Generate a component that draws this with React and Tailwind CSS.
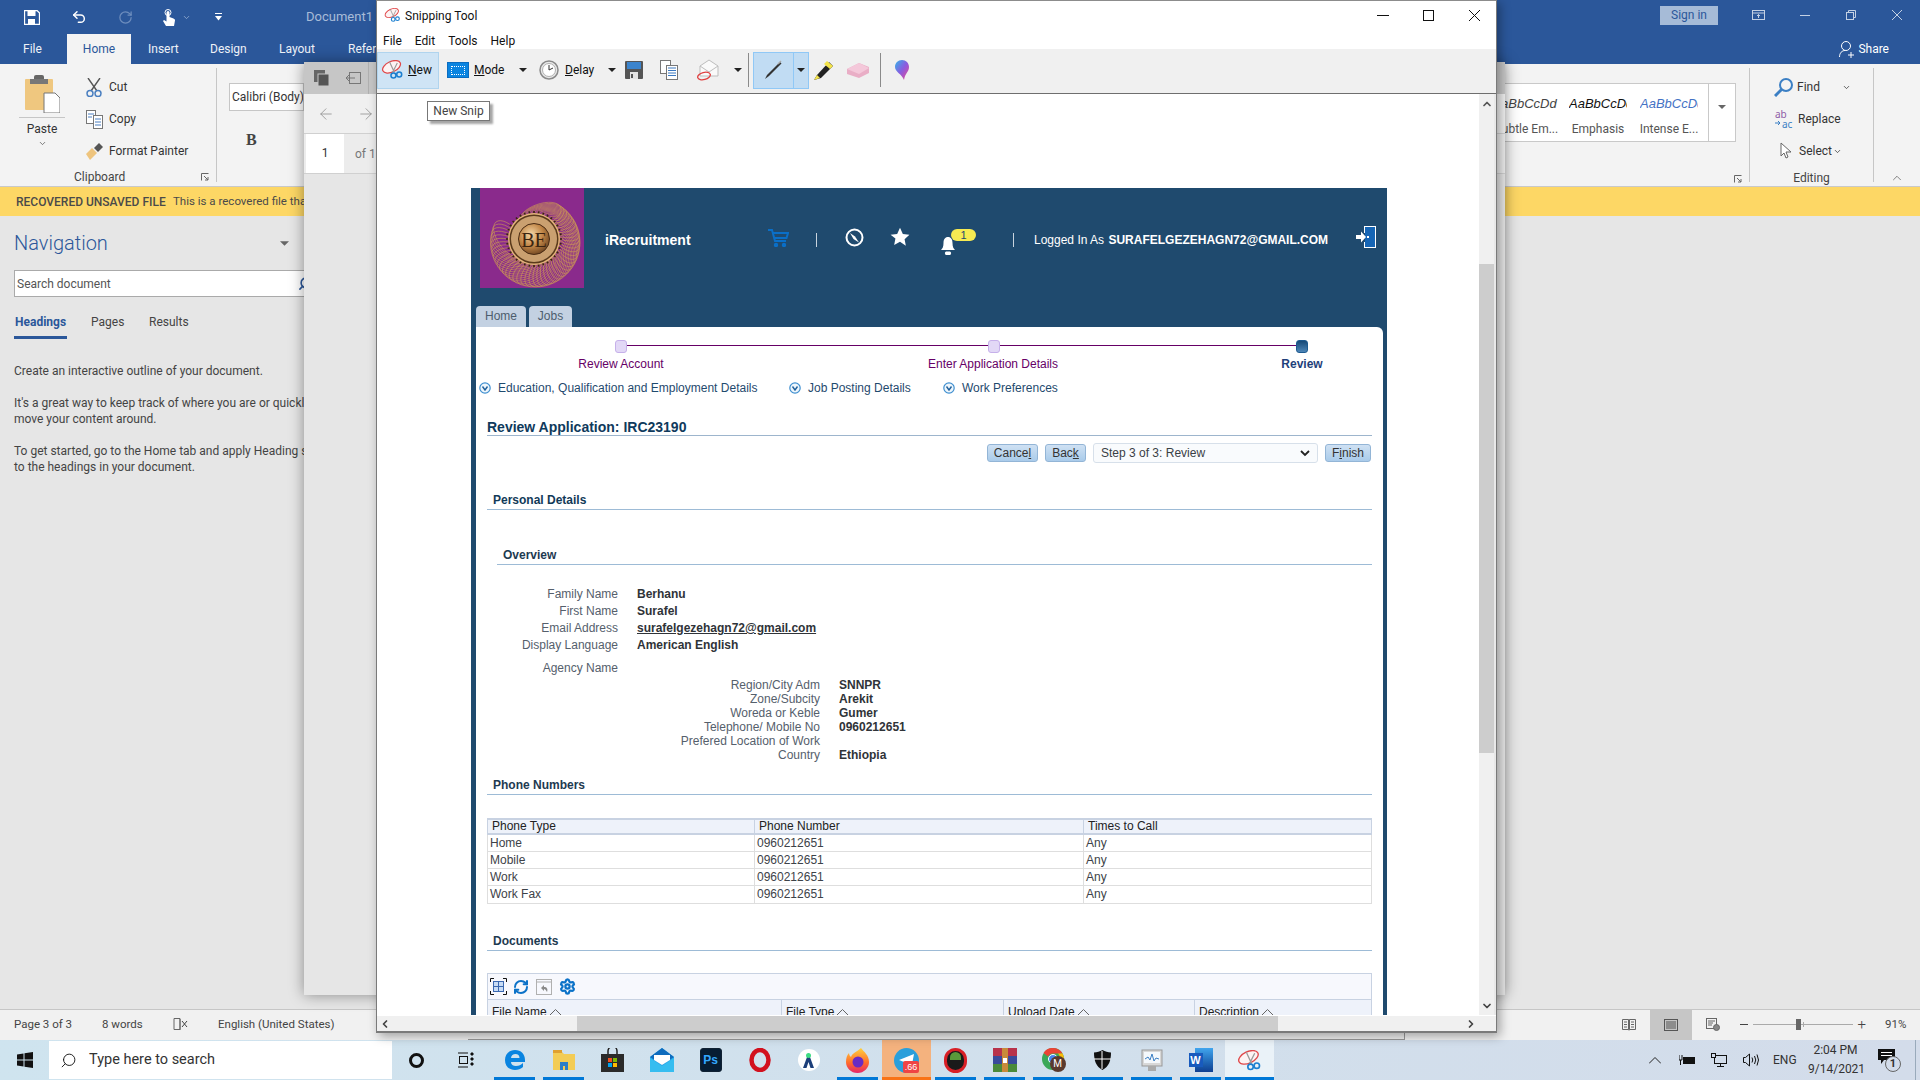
import React from "react";
import { Undo2, RotateCw, ChevronDown, ChevronUp, ChevronLeft, ChevronRight, ArrowLeft, ArrowRight, Search, RefreshCw, Settings } from "lucide-react";

const Tri = ({ c = "#333", w = 8, h = 4 }) => (
  <svg width={w} height={h} viewBox="0 0 8 4"><path d="M0 0h8L4 4z" fill={c} /></svg>
);

const SnipIcon = ({ s = 24 }) => (
  <svg width={s} height={s * 0.84} viewBox="0 0 24 20" fill="none">
    <ellipse cx="11" cy="7" rx="10" ry="5.5" transform="rotate(-25 11 7)" stroke="#e0484a" strokeWidth="1.3" fill="#fdf3f3" />
    <path d="M9 2l5 11M17 3L12 13" stroke="#9a9a9a" strokeWidth="1.2" />
    <circle cx="13" cy="16" r="2.6" stroke="#1b7fd0" strokeWidth="1.6" />
    <circle cx="19" cy="15" r="2.6" stroke="#1b7fd0" strokeWidth="1.6" />
  </svg>
);

const Logo = () => {
  const loops = Array.from({ length: 46 }, (_, i) => {
    const deg = -75 + i * 5.6;
    const a = (deg * Math.PI) / 180;
    const rad = 27 + 5 * Math.sin(a + 0.6);
    return { x: 54 + rad * Math.cos(a), y: 50 + rad * Math.sin(a), r: deg + 55 };
  });
  const teeth = Array.from({ length: 36 }, (_, i) => i * 10);
  return (
    <svg width="104" height="100" viewBox="0 0 104 100" className="block">
      <rect width="104" height="100" fill="#8a2a8c" />
      <g fill="none" stroke="#d0a050" strokeWidth="0.55">
        {loops.map((l, i) => (
          <ellipse key={i} cx={l.x} cy={l.y} rx="22" ry="11" transform={`rotate(${l.r} ${l.x} ${l.y})`} />
        ))}
      </g>
      <defs>
        <radialGradient id="coin" cx="40%" cy="35%" r="70%">
          <stop offset="0" stopColor="#f6d8a8" />
          <stop offset="0.55" stopColor="#c08546" />
          <stop offset="1" stopColor="#6b4220" />
        </radialGradient>
      </defs>
      {teeth.map((t) => (
        <rect key={t} x="53.2" y="23" width="1.6" height="3" fill="#3a2410" transform={`rotate(${t} 54 51)`} />
      ))}
      <circle cx="54" cy="51" r="26" fill="#e2b27a" />
      <circle cx="54" cy="51" r="24.500" fill="#5a3a1c" />
      <circle cx="54" cy="51" r="23" fill="#caa070" />
      <circle cx="54" cy="51" r="15.500" fill="url(#coin)" stroke="#4a2c14" strokeWidth="1" />
      <text x="54" y="59" textAnchor="middle" fontSize="20" fontFamily="'Liberation Serif',serif" fill="#3b2410">BE</text>
    </svg>
  );
};

const Circ = () => (
  <svg width="12" height="12" viewBox="0 0 12 12" fill="none" className="shrink-0">
    <circle cx="6" cy="6" r="5.2" stroke="#3f8fd0" strokeWidth="1.2" fill="#eef6fc" />
    <path d="M3.5 4.5L6 8l2.5-3.5" stroke="#1f5f9a" strokeWidth="1.4" />
  </svg>
);

const Square3 = ({ dark }) => (
  <div className={dark ? "w-[12px] h-[13px] rounded-[3px] border border-[#1d5a90] bg-gradient-to-b from-[#164a78] to-[#4d86b8] shrink-0" : "w-[12px] h-[13px] rounded-[3px] border border-[#c6b0ea] bg-[#e2d8f6] shrink-0"} />
);

const Sec = ({ children, cls }) => (
  <div className={"h-[17px] leading-[16px] pl-[6px] font-bold text-[#1e3a50] text-[12px] border-b border-[#9dbbd6] box-content " + (cls || "")}>{children}</div>
);

const Btn = ({ w, children }) => (
  <div className={w + " h-[18px] leading-[17px] text-center text-[12px] text-[#333] rounded-[3px] border border-[#93b5d6] bg-gradient-to-b from-[#cfe1f3] to-[#a9cbea]"}>{children}</div>
);

const Row = ({ l, v, link }) => (
  <div className="flex h-[17px] leading-[17px]">
    <div className="w-[121px] text-right text-[#55606c]">{l}</div>
    <div className={"ml-[19px] font-bold text-[#2f3338] " + (link ? "underline" : "")}>{v}</div>
  </div>
);

const Sub = ({ l, v }) => (
  <div className="flex h-[14px] leading-[14px]">
    <div className="w-[323px] text-right text-[#55606c]">{l}</div>
    <div className="ml-[19px] font-bold text-[#2f3338]">{v}</div>
  </div>
);

const phones = ["Home", "Mobile", "Work", "Work Fax"];

const WebPage = () => (
  <div className="w-[916px] mt-[94px] ml-[94px] bg-[#1f4a6e] [font-family:'Liberation_Sans',Arial,sans-serif] text-[12px]">
    <div className="h-[118px] flex items-start text-white">
      <div className="ml-[9px]"><Logo /></div>
      <div className="ml-[21px] mt-[44px] font-bold text-[14px] leading-[16px] w-[86px]">iRecruitment</div>
      <svg className="ml-[77px] mt-[41px]" width="21" height="18" viewBox="0 0 21 18" fill="none" stroke="#0a6fc8" strokeWidth="2">
        <path d="M0 1h4l3 11h11" /><path d="M5 4h15l-1.5 5H6.5" /><circle cx="8" cy="16" r="1.2" fill="#0a6fc8" /><circle cx="16" cy="16" r="1.2" fill="#0a6fc8" />
      </svg>
      <div className="ml-[27px] mt-[45px] w-px h-[14px] bg-[#c8d4de]" />
      <svg className="ml-[28px] mt-[40px]" width="19" height="19" viewBox="0 0 19 19" fill="none">
        <circle cx="9.5" cy="9.5" r="8" stroke="#fff" strokeWidth="2" />
        <path d="M5 5l5 3.5 4 6-5.5-3.5z" fill="#fff" />
      </svg>
      <svg className="ml-[26px] mt-[39px]" width="20" height="20" viewBox="0 0 24 24"><path d="M12 1l3.4 7.3 7.9 1-5.8 5.4 1.5 7.9L12 17.8l-7 3.8 1.5-7.9L.7 9.3l7.9-1z" fill="#fff" /></svg>
      <div className="relative ml-[31px] mt-[49px] w-[14px] h-[18px]">
        <svg width="14" height="18" viewBox="0 0 14 18"><path d="M7 0c3 0 4.500 2.500 4.500 6 0 4 1 5.500 2.500 7H0c1.500-1.500 2.500-3 2.500-7C2.500 2.500 4 0 7 0zM5 14.500h4A2 2 0 0 1 7 18a2 2 0 0 1-2-3.500z" fill="#fff" /></svg>
        <div className="absolute left-[10px] top-[-8px] w-[25px] h-[12px] rounded-full bg-[#f6ea52] text-[#1f4a6e] text-[11px] leading-[12px] text-center">1</div>
      </div>
      <div className="ml-[58px] mt-[45px] w-px h-[14px] bg-[#c8d4de]" />
      <div className="ml-[20px] mt-[44px] leading-[16px] whitespace-nowrap">Logged In As <span className="font-bold ml-[1px]">SURAFELGEZEHAGN72@GMAIL.COM</span></div>
      <svg className="ml-[28px] mt-[38px]" width="20" height="22" viewBox="0 0 20 22">
        <path d="M8 0h12v22H8v-6h1v5h10V1H9v6H8z" fill="#fff" />
        <rect x="9" y="1" width="10" height="20" fill="#1565b5" />
        <rect x="11" y="10" width="2" height="2" fill="#fff" />
        <path d="M0 9h5V5.500L10 11l-5 5.500V13H0z" fill="#fff" />
      </svg>
    </div>
    <div className="h-[21px] flex pl-[5px] gap-[3px] text-[#4d5d6d]">
      <div className="w-[50px] h-[21px] leading-[21px] text-center rounded-t-[4px] bg-[#c3d1e2]">Home</div>
      <div className="w-[43px] h-[21px] leading-[21px] text-center rounded-t-[4px] bg-[#c3d1e2]">Jobs</div>
    </div>
    <div className="ml-[5px] mr-[4px] h-[700px] bg-white rounded-tr-[6px] overflow-hidden">
      <div className="flex pl-[139px] pt-[13px]">
        <Square3 />
        <div className="w-[361px] h-[1px] mt-[5px] bg-[#660066]" />
        <Square3 />
        <div className="w-[296px] h-[1px] mt-[5px] bg-[#660066]" />
        <Square3 dark />
      </div>
      <div className="flex h-[14px] mt-[4px] leading-[14px] text-[#660066] text-center">
        <div className="ml-[100px] w-[90px] whitespace-nowrap">Review Account</div>
        <div className="ml-[261px] w-[132px] whitespace-nowrap">Enter Application Details</div>
        <div className="ml-[213px] w-[60px] font-bold text-[#1f3f7a]">Review</div>
      </div>
      <div className="flex items-center h-[14px] mt-[10px] pl-[3px] text-[#1f4a6e] whitespace-nowrap">
        <Circ /><span className="ml-[7px] w-[259px]">Education, Qualification and Employment Details</span>
        <span className="ml-[32px]"><Circ /></span><span className="ml-[7px] w-[103px]">Job Posting Details</span>
        <span className="ml-[32px]"><Circ /></span><span className="ml-[7px]">Work Preferences</span>
      </div>
      <div className="mx-[11px]">
        <div className="mt-[24px] h-[16px] leading-[16px] font-bold text-[14px] text-[#0f3a5c] border-b border-[#9db5cd] box-content">Review Application: IRC23190</div>
        <div className="flex justify-end items-center gap-[7px] pr-[1px] mt-[7px] h-[20px]">
          <Btn w="w-[51px]">Cance<u>l</u></Btn>
          <Btn w="w-[41px]">Bac<u>k</u></Btn>
          <div className="w-[225px] h-[20px] flex items-center justify-between px-[7px] border border-[#d7e0ea] rounded-[3px] bg-[#f9fbfd] text-[#3a4046]">
            <span>Step 3 of 3: Review</span>
            <svg width="10" height="7" viewBox="0 0 10 7" fill="none"><path d="M1 1l4 4 4-4" stroke="#222" strokeWidth="1.800" /></svg>
          </div>
          <Btn w="w-[46px]">F<u>i</u>nish</Btn>
        </div>
        <Sec cls="mt-[29px] text-[#123a58]">Personal Details</Sec>
        <div className="ml-[10px]">
          <Sec cls="mt-[37px]">Overview</Sec>
          <div className="mt-[21px]">
            <Row l="Family Name" v="Berhanu" />
            <Row l="First Name" v="Surafel" />
            <Row l="Email Address" v="surafelgezehagn72@gmail.com" link />
            <Row l="Display Language" v="American English" />
            <div className="mt-[6px]"><Row l="Agency Name" v="" /></div>
            <div className="mt-[1px]">
              <Sub l="Region/City Adm" v="SNNPR" />
              <Sub l="Zone/Subcity" v="Arekit" />
              <Sub l="Woreda or Keble" v="Gumer" />
              <Sub l="Telephone/ Mobile No" v="0960212651" />
              <Sub l="Prefered Location of Work" v="" />
              <Sub l="Country" v="Ethiopia" />
            </div>
          </div>
        </div>
        <Sec cls="mt-[15px]">Phone Numbers</Sec>
        <div className="mt-[23px] border border-[#dedede] text-[#3d4248]">
          <div className="grid grid-cols-[267px_329px_1fr] h-[17px] leading-[13px] bg-[#eef2fa] border-y-2 border-x border-[#c8d2e2] -mt-[1px] -mx-[1px] text-[#222]">
            <div className="pl-[4px] border-r border-[#c8d2e2]">Phone Type</div>
            <div className="pl-[4px] border-r border-[#c8d2e2]">Phone Number</div>
            <div className="pl-[4px]">Times to Call</div>
          </div>
          {phones.map((p) => (
            <div key={p} className="grid grid-cols-[267px_329px_1fr] h-[17px] leading-[16px] border-b border-[#dedede] last:border-b-0">
              <div className="pl-[2px] border-r border-[#dedede]">{p}</div>
              <div className="pl-[2px] border-r border-[#dedede]">0960212651</div>
              <div className="pl-[2px]">Any</div>
            </div>
          ))}
        </div>
        <Sec cls="mt-[29px]">Documents</Sec>
        <div className="mt-[22px] h-[26px] border border-b-0 border-[#c8d2e2] bg-[#f7f8fd] flex items-center pl-[2px]">
          <svg width="17" height="17" viewBox="0 0 17 17" fill="none">
            <rect x="3.500" y="3.500" width="10" height="10" fill="#c8dcf5" stroke="#3a68b0" />
            <path d="M8.500 3.500v10M3.500 8.500h10" stroke="#3a68b0" />
            <path d="M0.500 4V0.500H4M13 0.500h3.500V4M16.500 13v3.500H13M4 16.500H0.500V13" stroke="#111" />
          </svg>
          <RefreshCw size={16} color="#0b72c8" strokeWidth={3} className="ml-[6px]" />
          <svg className="ml-[7px]" width="16" height="16" viewBox="0 0 16 16" fill="none">
            <rect x="0.500" y="0.500" width="15" height="15" stroke="#b0b0b0" />
            <path d="M0 3h16" stroke="#b0b0b0" />
            <path d="M5 9l3-3v2c3 0 4 2 3 5-1-2-2-3-3-3v2z" fill="#8a8a8a" />
          </svg>
          <Settings size={17} color="#0b72c8" strokeWidth={3.200} className="ml-[7px]" />
        </div>
        <div className="grid grid-cols-[294px_222px_191px_1fr] border border-[#c8d2e2] bg-[#eef2fa] h-[26px] text-[#222]">
          {["File Name", "File Type", "Upload Date", "Description"].map((t, i) => (
            <div key={t} className={"pl-[4px] flex items-center h-[24px] gap-[2px] " + (i < 3 ? "border-r border-[#c8d2e2]" : "")}>
              {t}
              <svg width="13" height="7" viewBox="0 0 13 7" fill="none"><path d="M0.500 6.500L6.500 0.500l6 6z" stroke="#666" /></svg>
            </div>
          ))}
        </div>
      </div>
    </div>
  </div>
);

const SnipWindow = () => (
  <div className="absolute left-[376px] top-0 w-[1121px] h-[1033px] bg-white border-t border-[#8c8c8c] border-x-[1px] border-b-2 border-x-[#7a7a7a] border-b-[#7a7a7a] shadow-[3px_3px_10px_rgba(0,0,0,0.35)] flex flex-col text-[12px] text-[#111] z-20">
    <div className="h-[29px] shrink-0 flex items-center relative">
      <div className="ml-[7px]"><SnipIcon s={17} /></div>
      <span className="ml-[4px]">Snipping Tool</span>
      <div className="ml-auto flex items-center">
        <div className="w-[12px] h-px bg-[#111]" />
        <div className="ml-[34px] w-[11px] h-[11px] border border-[#111]" />
        <svg className="ml-[35px] mr-[16px]" width="11" height="11" viewBox="0 0 11 11" stroke="#111"><path d="M0 0l11 11M11 0L0 11" /></svg>
      </div>
    </div>
    <div className="h-[19px] shrink-0 flex items-center pl-[6px] pt-[2px] gap-[13px]">
      <span>File</span><span>Edit</span><span>Tools</span><span>Help</span>
    </div>
    <div className="h-[45px] shrink-0 bg-[#f0f0f0] border-b-[1.5px] border-[#6e6e6e] pb-[2px] flex items-center text-[#111]">
      <div className="w-[62px] h-[37px] bg-[#cfe4f5] border border-[#b0d4ee] flex items-center pl-[3px] gap-[4px]">
        <SnipIcon s={23} /><span><u>N</u>ew</span>
      </div>
      <div className="ml-[8px] w-[22px] h-[16px] bg-[#0a84e0] border border-[#0a6cc0] flex items-center justify-center">
        <div className="w-[14px] h-[9px] border border-dotted border-white" />
      </div>
      <span className="ml-[5px] w-[31px]"><u>M</u>ode</span>
      <span className="ml-[14px]"><Tri c="#222" /></span>
      <svg className="ml-[12px]" width="20" height="20" viewBox="0 0 20 20" fill="none">
        <circle cx="10" cy="10" r="9" fill="#e8e8e8" stroke="#8a8a8a" strokeWidth="1.500" />
        <circle cx="10" cy="10" r="6.500" fill="#fff" stroke="#b0b0b0" />
        <path d="M10 5v5l4-2" stroke="#333" />
      </svg>
      <span className="ml-[6px] w-[29px]"><u>D</u>elay</span>
      <span className="ml-[14px]"><Tri c="#222" /></span>
      <svg className="ml-[9px]" width="18" height="18" viewBox="0 0 18 18">
        <rect width="18" height="18" rx="1" fill="#555" />
        <rect x="2" y="1" width="14" height="7" fill="#3c84cc" />
        <rect x="5" y="11" width="8" height="7" fill="#e4e4e4" />
        <rect x="6" y="13" width="2" height="4" fill="#555" />
      </svg>
      <svg className="ml-[17px]" width="18" height="20" viewBox="0 0 18 20" fill="none" stroke="#777">
        <rect x="0.500" y="0.500" width="10" height="13" fill="#fff" />
        <rect x="6.500" y="5.500" width="11" height="14" fill="#fff" />
        <path d="M8 8h8M8 10.500h8M8 13h8M8 15.500h8" stroke="#3a78c0" />
      </svg>
      <svg className="ml-[19px]" width="22" height="22" viewBox="0 0 22 22" fill="none">
        <path d="M3 7l9-6 9 6v10H3z" fill="#fafafa" stroke="#bdbdbd" />
        <path d="M3 7l9 6 9-6" stroke="#bdbdbd" />
        <ellipse cx="7" cy="17" rx="6.500" ry="3.500" stroke="#e04040" strokeWidth="1.300" transform="rotate(-15 7 17)" />
      </svg>
      <span className="ml-[15px]"><Tri c="#222" /></span>
      <div className="ml-[6px] w-px h-[34px] bg-[#8a8a8a]" />
      <div className="ml-[4px] flex h-[37px] bg-[#c1dcf3] border border-[#90c8f6]">
        <div className="w-[40px] h-full border-r border-[#90c8f6] flex items-center justify-center">
          <svg width="22" height="22" viewBox="0 0 22 22" fill="none"><path d="M2 20l2-4L17 3l1.500 1.500L6 17z" fill="#333" /><path d="M15 5l3-3" stroke="#aaa" strokeWidth="1.500" /></svg>
        </div>
        <div className="w-[14px] h-full flex items-center justify-center"><Tri c="#222" /></div>
      </div>
      <svg className="ml-[4px]" width="21" height="21" viewBox="0 0 21 21"><path d="M1 20l3-5L16 2l4 4L8 18z" fill="#222" /><path d="M14 1l6 5-3 3-6-5z" fill="#f3e34a" /><path d="M1 20l3-5 3 3z" fill="#f3e34a" /></svg>
      <svg className="ml-[13px]" width="22" height="16" viewBox="0 0 22 16"><path d="M0 7l12-6 10 4v6l-10 5-12-4z" fill="#e9aec6" /><path d="M0 7l12 5 10-6-10-5z" fill="#f4c8da" /></svg>
      <div className="ml-[11px] w-px h-[34px] bg-[#8a8a8a]" />
      <svg className="ml-[14px]" width="14" height="20" viewBox="0 0 14 20">
        <defs><linearGradient id="p3" x1="0" y1="0" x2="1" y2="1"><stop offset="0" stopColor="#33b5e8" /><stop offset="0.5" stopColor="#8a5be0" /><stop offset="1" stopColor="#f0478c" /></linearGradient></defs>
        <path d="M7 0c4 0 7 3 7 7 0 5-4 6-5 13C7 14 0 12 0 7c0-4 3-7 7-7z" fill="url(#p3)" />
      </svg>
    </div>
    <div className="relative flex-1 min-h-0 flex">
      <div className="absolute left-[50px] top-[7px] w-[63px] h-[20px] leading-[18px] text-center bg-white border border-[#777] shadow-[3px_3px_2px_rgba(0,0,0,0.35)] text-[#444] z-10">New Snip</div>
      <div className="flex-1 min-w-0 overflow-hidden"><WebPage /></div>
      <div className="w-[15px] shrink-0 bg-[#f0f0f0] flex flex-col items-center">
        <ChevronUp size={12} strokeWidth={3.500} color="#555" className="mt-[4px]" />
        <div className="mt-[154px] w-full h-[489px] bg-[#cdcdcd]" />
        <div className="flex-1" />
        <ChevronDown size={12} strokeWidth={3.500} color="#444" className="mb-[3px]" />
      </div>
      <div className="w-[2px] shrink-0 bg-[#e8e8e8]" />
    </div>
    <div className="h-[16px] shrink-0 bg-[#f0f0f0] flex items-center border-t border-[#fff]">
      <ChevronLeft size={12} strokeWidth={3.500} color="#444" className="ml-[2px]" />
      <div className="ml-[186px] w-[701px] h-[15px] bg-[#cdcdcd]" />
      <ChevronRight size={12} strokeWidth={3.500} color="#444" className="ml-[187px]" />
    </div>
  </div>
);

const DocWindow = () => (
  <div className="absolute left-[304px] top-[62px] w-[1201px] h-[933px] bg-[#e6e6e6] shadow-[0_0_14px_rgba(0,0,0,0.4)] z-10 flex flex-col">
    <div className="h-[32px] bg-[#c6c6c6] flex items-center">
      <svg className="ml-[10px]" width="15" height="16" viewBox="0 0 15 16"><rect width="11" height="12" fill="#666" /><rect x="4" y="4" width="11" height="12" fill="#555" stroke="#c6c6c6" /></svg>
      <svg className="ml-[16px]" width="16" height="12" viewBox="0 0 16 12" fill="none" stroke="#777"><rect x="4.500" y="0.500" width="11" height="11" /><path d="M10 6H1M4 3L1 6l3 3" /></svg>
      <div className="ml-[7px] w-px h-[32px] bg-[#b0b0b0]" />
    </div>
    <div className="h-[40px] bg-[#f0f0f0] border-b border-[#d0d0d0] flex items-center">
      <ArrowLeft size={18} strokeWidth={1} color="#888" className="ml-[13px]" />
      <ArrowRight size={18} strokeWidth={1} color="#888" className="ml-[22px]" />
    </div>
    <div className="h-[40px] bg-[#ececec] border-b border-[#d0d0d0] flex items-center text-[12px]">
      <div className="ml-[2px] w-[38px] h-full bg-white text-center leading-[39px] text-[#333]">1</div>
      <span className="ml-[11px] text-[#777]">of 1</span>
    </div>
  </div>
);

const R = ({ icon, label }) => (
  <div className="h-[32px] flex items-center text-[#333]">
    <div className="w-[23px] flex justify-start">{icon}</div>
    <span>{label}</span>
  </div>
);

const S = ({ a, b, cls, w }) => (
  <div className={w + " flex flex-col items-center shrink-0"}>
    <span className={"w-[58px] overflow-hidden italic text-[13px] leading-[18px] whitespace-nowrap [font-family:'Liberation_Sans',sans-serif] " + cls}>{a}</span>
    <span className="mt-[8px] text-[#555] whitespace-nowrap leading-[16px]">{b}</span>
  </div>
);

const Launcher = () => (
  <svg width="8" height="8" viewBox="0 0 8 8" fill="none" stroke="#666"><path d="M.5 7.500V.5h7M3 3l4 4M7 4v3H4" /></svg>
);

const Ribbon = () => (
  <div className="h-[123px] shrink-0 bg-[#f3f3f3] border-b border-[#c9c9c9] flex text-[12px] text-[#333]">
    <div className="relative mt-[4px] h-[114px] w-[217px] shrink-0 border-r border-[#c6c6c6] flex flex-col">
      <div className="flex h-[100px]">
        <div className="ml-[19px] w-[46px] flex flex-col items-center shrink-0">
          <svg className="mt-[7px]" width="35" height="38" viewBox="0 0 35 38">
            <rect x="0" y="4" width="28" height="31" rx="1" fill="#efc77f" />
            <rect x="9" y="0" width="10" height="8" rx="2" fill="#666" />
            <rect x="5" y="4" width="18" height="5" fill="#777" />
            <path d="M19 18h11l5 5v15H19z" fill="#fff" stroke="#777" />
          </svg>
          <div className="mt-[4px] w-[46px] h-px bg-[#c6c6c6]" />
          <span className="mt-[3px] leading-[16px]">Paste</span>
          <ChevronDown size={9} color="#555" className="mt-[2px]" />
        </div>
        <div className="ml-[21px] flex flex-col mt-[3px]">
          <R label="Cut" icon={
            <svg width="16" height="19" viewBox="0 0 16 19" fill="none"><path d="M2 0l9 13M14 0L5 13" stroke="#555" strokeWidth="1.400" /><circle cx="4" cy="15.500" r="3" stroke="#4a7fc0" strokeWidth="1.500" /><circle cx="12" cy="15.500" r="3" stroke="#4a7fc0" strokeWidth="1.500" /></svg>
          } />
          <R label="Copy" icon={
            <svg width="17" height="19" viewBox="0 0 17 19" fill="none" stroke="#777"><rect x="0.500" y="0.500" width="9" height="13" fill="#fff" /><rect x="7.500" y="5.500" width="9" height="13" fill="#fff" /><path d="M2 4h6M2 7h4M9 9h6M9 12h6M9 15h6" stroke="#4a7fc0" /></svg>
          } />
          <R label="Format Painter" icon={
            <svg width="17" height="18" viewBox="0 0 17 18"><path d="M0 12l6-6 5 5-7 7z" fill="#eec47d" /><path d="M8 6l5-5 4 4-5 5z" fill="#555" /></svg>
          } />
        </div>
      </div>
      <div className="relative h-[14px] leading-[14px] mt-[3px] pl-[74px] text-[#444] w-[216px]">
        <span>Clipboard</span>
        <span className="absolute right-[7px] top-[3px]"><Launcher /></span>
      </div>
    </div>
    <div className="flex-1 min-w-0">
      <div className="ml-[12px] mt-[19px] w-[75px] h-[28px] bg-white border border-[#c6c6c6] leading-[26px] pl-[2px] overflow-hidden whitespace-nowrap">Calibri (Body)</div>
      <div className="ml-[29px] mt-[20px] font-bold text-[#444] text-[16px] [font-family:'Liberation_Serif',serif] leading-[18px]">B</div>
    </div>
    <div className="relative mt-[4px] h-[114px] w-[310px] border-r border-[#c6c6c6] shrink-0">
      <div className="mt-[15px] w-[296px] h-[59px] bg-white border border-[#c9c9c9] flex pt-[11px] overflow-hidden">
        <div className="w-[53px] shrink-0" />
        <S w="w-[72px]" a="aBbCcDd" b="ubtle Em..." cls="text-[#444]" />
        <S w="w-[64px]" a="AaBbCcDd" b="Emphasis" cls="text-[#111]" />
        <S w="w-[78px]" a="AaBbCcDd" b="Intense E..." cls="text-[#4472c4]" />
        <div className="w-[1px] -mt-[11px] h-[59px] bg-[#c9c9c9]" />
        <div className="flex-1 flex justify-center pt-[10px]"><Tri c="#666" /></div>
      </div>
      <span className="absolute right-[7px] top-[107px]"><Launcher /></span>
    </div>
    <div className="mt-[4px] h-[114px] w-[124px] border-r border-[#c6c6c6] shrink-0 flex flex-col">
      <div className="pl-[24px] pt-[3px] h-[103px]">
        <div className="h-[32px] flex items-center">
          <svg width="19" height="19" viewBox="0 0 19 19" fill="none"><circle cx="12" cy="7" r="6" stroke="#3b7fc4" strokeWidth="2" /><path d="M7.500 11.500L1 18" stroke="#3b7fc4" strokeWidth="3" /></svg>
          <span className="ml-[4px]">Find</span>
          <ChevronDown size={9} className="ml-[22px]" />
        </div>
        <div className="h-[32px] flex items-center">
          <svg width="20" height="19" viewBox="0 0 20 19"><text x="1" y="8" fontSize="10" fill="#8e5ba6" fontFamily="'Noto Sans',sans-serif">ab</text><text x="8" y="18" fontSize="10" fill="#3b7fc4" fontFamily="'Noto Sans',sans-serif">ac</text><path d="M1 13h5M4 11l2 2-2 2" stroke="#3b7fc4" fill="none" /></svg>
          <span className="ml-[4px]">Replace</span>
        </div>
        <div className="h-[32px] flex items-center pl-[6px]">
          <svg width="12" height="18" viewBox="0 0 12 18" fill="#fff" stroke="#666"><path d="M1 1v13l3-3 2 5 2-1-2-5h5z" /></svg>
          <span className="ml-[7px]">Select</span>
          <ChevronDown size={9} className="ml-[1px]" />
        </div>
      </div>
      <div className="h-[11px] leading-[14px] text-center text-[#444]">Editing</div>
    </div>
    <div className="w-[46px] shrink-0 flex items-end justify-center pb-[1px]">
      <ChevronUp size={14} strokeWidth={1} color="#333" />
    </div>
  </div>
);

const Tab = ({ w, children }) => <div className={w + " text-[#eef2f8] h-full leading-[31px] shrink-0 whitespace-nowrap"}>{children}</div>;

const Slot = ({ children, bar, bg }) => (
  <div className={"relative w-[49px] h-full shrink-0 flex items-center justify-center " + (bg || "")}>
    {children}
    {bar === "b" && <div className="absolute bottom-0 left-[4px] right-[4px] h-[3px] bg-[#0078d7]" />}
    {bar === "s" && <div className="absolute bottom-0 left-0 right-0 h-[3px] bg-[#0078d7]" />}
    {bar === "o" && <div className="absolute bottom-0 left-0 right-0 h-[3px] bg-[#f97316]" />}
  </div>
);

const Taskbar = () => (
  <div className="h-[40px] shrink-0 flex bg-gradient-to-r from-[#cfe4ef] to-[#d3dcea] text-[#222] items-stretch">
    <div className="w-[49px] flex items-center justify-center shrink-0">
      <svg width="16" height="16" viewBox="0 0 16 16" fill="#111"><path d="M0 2.500l6.500-1v6H0zM7.500 1.300L16 0v7.500H7.500zM0 8.500h6.500v6l-6.500-1zM7.500 8.500H16V16l-8.500-1.300z" /></svg>
    </div>
    <div className="w-[343px] bg-white flex items-center shrink-0 my-[1px]">
      <Search size={17} strokeWidth={1.300} color="#111" className="ml-[11px] -scale-x-100" />
      <span className="ml-[12px] text-[14.500px] text-[#333]">Type here to search</span>
    </div>
    <Slot><div className="w-[15px] h-[15px] rounded-full border-[3px] border-[#111]" /></Slot>
    <Slot>
      <svg width="16" height="16" viewBox="0 0 16 16" fill="none" stroke="#111"><path d="M0 1h10M0 15h10" /><rect x="1.500" y="4.500" width="8" height="7" /><path d="M13 1h2v2h-2zM13 6h2v2h-2zM13 11h2v2h-2z" fill="#111" /></svg>
    </Slot>
    <Slot bar="b">
      <svg width="20" height="20" viewBox="0 0 20 20"><path d="M10 0C4 0 0 4.500 0 10c0 6 4 10 10 10 3 0 6-1 8-3v-4c-2 2-4 3-7 3-3 0-5-1.500-5-4h14v-2C20 4 16 0 10 0zM6 8c.3-2.500 2-4 4.500-4S14.500 5.500 14.500 8z" fill="#0a84e0" /></svg>
    </Slot>
    <Slot bar="b">
      <svg width="22" height="20" viewBox="0 0 22 20"><path d="M0 2h9l2 2h11v16H0z" fill="#f3cc55" /><rect x="0" y="0" width="9" height="3" fill="#e0a030" /><path d="M7 20v-8h8v8h-3v-4h-2v4z" fill="#2b7dc8" /></svg>
    </Slot>
    <Slot>
      <svg width="23" height="24" viewBox="0 0 23 24"><path d="M7 6V3a4.500 4.500 0 0 1 9 0v3" fill="none" stroke="#222" strokeWidth="1.500" /><rect y="6" width="23" height="18" fill="#2a2a2a" /><rect x="7" y="10" width="4" height="4" fill="#f25022" /><rect x="12" y="10" width="4" height="4" fill="#7fba00" /><rect x="7" y="15" width="4" height="4" fill="#00a4ef" /><rect x="12" y="15" width="4" height="4" fill="#ffb900" /></svg>
    </Slot>
    <Slot>
      <svg width="24" height="24" viewBox="0 0 24 24"><path d="M0 9L12 0l12 9v15H0z" fill="#28a8ea" /><path d="M0 9l12 8 12-8-12-9z" fill="#0f6cbd" /><path d="M4 7h16v5l-8 5-8-5z" fill="#fff" /><path d="M0 24V10l12 8 12-8v14z" fill="#36bdf0" /></svg>
    </Slot>
    <Slot>
      <div className="w-[22px] h-[24px] rounded-[3px] bg-[#071d33] border border-[#123] text-[#33a8ff] font-bold text-[12px] leading-[22px] text-center [font-family:'Liberation_Sans',sans-serif]">Ps</div>
    </Slot>
    <Slot>
      <svg width="22" height="24" viewBox="0 0 22 24" fill="none"><ellipse cx="11" cy="12" rx="8.500" ry="10" stroke="#d2111e" strokeWidth="4.500" /></svg>
    </Slot>
    <Slot>
      <div className="w-[22px] h-[22px] rounded-full bg-white flex items-center justify-center">
        <svg width="11" height="15" viewBox="0 0 11 15"><path d="M5.500 0l5.500 15H7.500L5.500 9l-2 6H0z" fill="#1c3f7a" /><circle cx="5.500" cy="2.500" r="2.500" fill="#3ddc84" /></svg>
      </div>
    </Slot>
    <Slot bar="b">
      <svg width="23" height="25" viewBox="0 0 23 25">
        <defs><linearGradient id="ff" x1="0" y1="0" x2="0" y2="1"><stop offset="0" stopColor="#ffd23c" /><stop offset="0.6" stopColor="#ff6a2b" /><stop offset="1" stopColor="#e3256b" /></linearGradient></defs>
        <path d="M15 0c3 4 8 7 8 14 0 6-5 11-11.500 11S0 20 0 14C0 10 1 7 3 5c0 2 1 3 2 4 1-4 6-5 10-9z" fill="url(#ff)" />
        <circle cx="12" cy="14" r="5.500" fill="#6a2bc4" />
      </svg>
    </Slot>
    <Slot bar="o" bg="bg-[#f4b27e]">
      <div className="relative w-[25px] h-[25px] rounded-full bg-[#2a9fdb] flex items-center justify-center">
        <svg width="15" height="13" viewBox="0 0 15 13"><path d="M0 6L15 0l-2.500 13L7.500 9.500 5.500 12 5 8z" fill="#fff" /></svg>
        <div className="absolute left-[9px] top-[13px] w-[16px] h-[12px] rounded-[2px] bg-[#ef4444] text-white text-[9px] leading-[12px] text-center [font-family:'Liberation_Sans',sans-serif]">.66</div>
      </div>
    </Slot>
    <Slot bar="b">
      <div className="w-[23px] h-[25px] rounded-full bg-[#1a1a1a] border-[3px] border-[#d81f26] flex items-center justify-center">
        <div className="w-[11px] h-[8px] rounded-t-[6px] bg-[#5a9a3a] -mt-[8px]" />
      </div>
    </Slot>
    <Slot bar="b">
      <svg width="24" height="24" viewBox="0 0 24 24"><rect width="24" height="8" fill="#b8324a" /><rect y="8" width="24" height="8" fill="#3a4a9a" /><rect y="16" width="24" height="8" fill="#4a8a3a" /><rect x="9" width="6" height="24" fill="#c88a3a" /><rect x="10" y="10" width="4" height="5" fill="#fff" /></svg>
    </Slot>
    <Slot bar="b">
      <div className="relative w-[24px] h-[24px]">
        <svg width="22" height="22" viewBox="0 0 22 22"><circle cx="11" cy="11" r="11" fill="#3aa757" /><path d="M11 0a11 11 0 0 1 9.500 5.500H11a5.500 5.500 0 0 0-5 3L1.500 5A11 11 0 0 1 11 0z" fill="#ea4335" /><path d="M20.500 5.500A11 11 0 0 1 11 22l5-8.500a5.500 5.500 0 0 0 0-8z" fill="#fbbc05" /><circle cx="11" cy="11" r="4.500" fill="#4285f4" stroke="#fff" /></svg>
        <div className="absolute left-[8px] top-[8px] w-[16px] h-[16px] rounded-full bg-[#5a3a2e] text-white text-[10px] leading-[16px] text-center">M</div>
      </div>
    </Slot>
    <Slot bar="b">
      <svg width="17" height="20" viewBox="0 0 17 20"><path d="M8.500 0C11 1.500 14 2.500 17 2.500c0 8-2 14-8.500 17.500C2 16.500 0 10.500 0 2.500 3 2.500 6 1.500 8.500 0z" fill="#111" /><path d="M8 1v18M0 9h17" stroke="#fff" /></svg>
    </Slot>
    <Slot bar="b">
      <svg width="24" height="24" viewBox="0 0 24 24"><rect x="2" y="2" width="20" height="16" fill="#d8d8d8" stroke="#999" /><rect x="4" y="4" width="16" height="11" fill="#f4f8fc" /><path d="M5 11l3-2 2 3 2-6 2 7 2-3 3 1" stroke="#3b7fc4" fill="none" /><rect x="8" y="18" width="8" height="5" fill="#aaa" /></svg>
    </Slot>
    <Slot bar="b">
      <div className="relative w-[24px] h-[24px]">
        <div className="absolute left-[6px] top-0 w-[18px] h-[24px] bg-gradient-to-b from-[#41a5ee] to-[#103f91]" />
        <div className="absolute left-0 top-[5px] w-[14px] h-[14px] bg-[#185abd] text-white text-[11px] font-bold leading-[14px] text-center [font-family:'Liberation_Sans',sans-serif]">W</div>
      </div>
    </Slot>
    <Slot bar="s" bg="bg-[#eaf2f8]"><SnipIcon s={25} /></Slot>
    <div className="flex-1" />
    <div className="w-[271px] shrink-0 flex items-center text-[12px] relative">
      <svg width="12" height="7" viewBox="0 0 12 7" fill="none" stroke="#222"><path d="M0 6.500L6 .5l6 6" /></svg>
      <svg className="ml-[18px]" width="16" height="10" viewBox="0 0 16 10"><rect x="4.500" y="2.500" width="11" height="6" fill="#111" stroke="#111" /><path d="M0 0v5h3V0M1.500 5v5" stroke="#111" fill="none" /></svg>
      <svg className="ml-[16px]" width="16" height="14" viewBox="0 0 16 14" fill="none" stroke="#111"><rect x="3.500" y="2.500" width="12" height="8" /><path d="M9.500 11v2M6 13.500h7" /><rect x="0.500" y="0.500" width="4" height="4" fill="#d3dcea" /></svg>
      <svg className="ml-[16px]" width="16" height="14" viewBox="0 0 16 14" fill="none" stroke="#111"><path d="M0.500 4.500h2L6.500 1v12l-4-3.500h-2z" /><path d="M9 4.500q1.500 2.500 0 5M11.500 3q2.500 4 0 8M14 1.500q3 5.500 0 11" /></svg>
      <span className="ml-[14px] w-[23px] text-[#333]">ENG</span>
      <div className="ml-[12px] w-[55px] text-center leading-[19px] text-[#333] whitespace-nowrap">
        <div>2:04 PM</div><div>9/14/2021</div>
      </div>
      <div className="relative ml-[15px] w-[24px] h-[24px]">
        <svg width="17" height="15" viewBox="0 0 17 15" className="mt-[1px]"><path d="M0 0h17v11H6l-3 4v-4H0z" fill="#111" /><path d="M3 3.500h11M3 6.500h11" stroke="#fff" /></svg>
        <div className="absolute left-[7px] top-[8px] w-[16px] h-[16px] rounded-full bg-[#d3dcea] border border-[#666] text-[11px] font-bold leading-[14px] text-center text-[#333]">1</div>
      </div>
      <div className="absolute right-[4px] top-0 h-full w-px bg-[#9ab]" />
    </div>
  </div>
);

const Status = () => (
  <div className="h-[31px] shrink-0 bg-[#f1f1f1] border-t border-[#c6c6c6] pb-[1px] flex items-center text-[11.500px] text-[#444]">
    <span className="ml-[14px] w-[88px]">Page 3 of 3</span>
    <span className="w-[71px]">8 words</span>
    <svg width="15" height="13" viewBox="0 0 15 13" fill="none" stroke="#666"><path d="M7 .5H1v11h6zM7 1v11" /><path d="M9 3l5 6M14 3L9 9" stroke="#444" /></svg>
    <span className="ml-[30px]">English (United States)</span>
    <div className="flex-1" />
    <svg width="14" height="14" viewBox="0 0 14 14" fill="none" stroke="#666"><path d="M7 1.500v11M.5 1.500h6v10h-6zM7.500 1.500h6v10h-6zM2 4h3M2 6.500h3M2 9h3M9 4h3M9 6.500h3M9 9h3" /></svg>
    <div className="ml-[14px] w-[42px] h-[30px] -mb-[1px] bg-[#c6c6c6] flex items-center justify-center">
      <svg width="14" height="12" viewBox="0 0 14 12" fill="none" stroke="#555"><rect x="0.500" y="0.500" width="13" height="11" /><path d="M2 3h10M2 5h10M2 7h10M2 9h10" /></svg>
    </div>
    <svg className="ml-[14px]" width="14" height="13" viewBox="0 0 14 13" fill="none" stroke="#666"><rect x="0.500" y="0.500" width="10" height="10" /><path d="M2 3h7M2 5h5M2 7h4" /><circle cx="10.500" cy="9.500" r="3" fill="#888" /></svg>
    <div className="ml-[20px] w-[8px] h-px bg-[#444]" />
    <div className="relative ml-[5px] w-[100px] h-px bg-[#aaa]">
      <div className="absolute left-[43px] -top-[5px] w-[5px] h-[11px] bg-[#666]" />
      <div className="absolute left-[50px] -top-[2px] w-px h-[5px] bg-[#aaa]" />
    </div>
    <span className="ml-[5px] text-[15px] leading-none font-light">+</span>
    <span className="ml-[19px] mr-[14px] w-[21px] whitespace-nowrap">91%</span>
  </div>
);

const Word = () => (
  <div className="absolute inset-0 flex flex-col">
    <div className="h-[34px] shrink-0 bg-[#2b579a] flex items-center text-white text-[12px]">
      <svg className="ml-[24px]" width="16" height="15" viewBox="0 0 16 15" fill="none"><path d="M.5.5h12.500l2.500 2.500v11.500H.5z" stroke="#fff" strokeWidth="1.300" /><rect x="3.500" y="1" width="8" height="5" fill="#fff" /><rect x="4" y="9" width="7" height="5.500" fill="#fff" /></svg>
      <Undo2 className="ml-[31px]" size={16} strokeWidth={2.200} color="#fff" />
      <RotateCw className="ml-[31px]" size={15} strokeWidth={2} color="#6d8dbd" />
      <svg className="ml-[29px]" width="13" height="17" viewBox="0 0 13 17" fill="none">
        <circle cx="6" cy="3.500" r="3" stroke="#fff" strokeWidth="1" />
        <path d="M4.500 3.500a1.500 1.500 0 0 1 3 0V8l4 1.500c1 .5 1.500 1 1.500 2L12 17H4L1 12l1-1 2.500 1.500z" fill="#fff" />
      </svg>
      <ChevronDown className="ml-[7px]" size={9} color="#9fb6d6" />
      <svg className="ml-[24px]" width="7" height="8" viewBox="0 0 7 8" fill="#fff"><rect width="7" height="1" x="0" y="0" /><path d="M0 3h7L3.500 7.500z" /></svg>
      <span className="ml-[84px] text-[13px] text-[#a8bcd8]">Document1 (</span>
      <div className="flex-1" />
      <div className="flex items-center mb-[4px]">
        <div className="w-[58px] h-[19px] leading-[19px] text-center bg-[#a6bbd7] text-[#2b579a]">Sign in</div>
        <svg className="ml-[34px]" width="13" height="10" viewBox="0 0 13 10" fill="none" stroke="#c4d1e4"><rect x="0.500" y="0.500" width="12" height="9" /><path d="M.5 3h12M6.500 8V4.500M5 6l1.500-1.500L8 6" /></svg>
        <div className="ml-[35px] w-[10px] h-px bg-[#c4d1e4]" />
        <svg className="ml-[36px]" width="10" height="10" viewBox="0 0 10 10" fill="none" stroke="#c4d1e4"><rect x="0.500" y="2.500" width="7" height="7" /><path d="M2.500 2.500V.5h7v7h-2" /></svg>
        <svg className="ml-[36px] mr-[18px]" width="10" height="10" viewBox="0 0 10 10" stroke="#c4d1e4"><path d="M0 0l10 10M10 0L0 10" /></svg>
      </div>
    </div>
    <div className="h-[30px] shrink-0 bg-[#2b579a] flex text-[12px]">
      <Tab w="w-[67px] pl-[23px]">File</Tab>
      <div className="w-[64px] h-full bg-[#f3f3f3] text-[#2b579a] text-center leading-[31px] shrink-0">Home</div>
      <Tab w="w-[62px] pl-[17px]">Insert</Tab>
      <Tab w="w-[69px] pl-[17px]">Design</Tab>
      <Tab w="w-[69px] pl-[17px]">Layout</Tab>
      <Tab w="w-[60px] pl-[17px]">Refer</Tab>
      <div className="flex-1" />
      <div className="flex items-center pr-[31px] text-white">
        <svg className="ml-[2px]" width="15" height="17" viewBox="0 0 15 17" fill="none" stroke="#fff"><circle cx="7" cy="5" r="4.500" /><path d="M.5 16c0-4 2.500-6.500 5.500-6.500M12 11v6M9 14h6" /></svg>
        <span className="ml-[4px]">Share</span>
      </div>
    </div>
    <Ribbon />
    <div className="h-[29px] shrink-0 bg-[#fdd765] flex items-center text-[11.500px] text-[#4a4a4a] pl-[16px] whitespace-nowrap">
      <span className="w-[157px] font-medium text-[12px]">RECOVERED UNSAVED FILE</span>
      <span>This is a recovered file that is temporarily stored on your computer.</span>
    </div>
    <div className="flex-1 min-h-0 bg-[#e6e6e6] overflow-hidden text-[12px] text-[#444]">
      <div className="pl-[14px] w-[304px]">
        <div className="mt-[13px] h-[28px] flex items-center justify-between pr-[15px]">
          <span className="text-[20px] font-light text-[#2b579a]">Navigation</span>
          <Tri c="#666" w={9} h={5} />
        </div>
        <div className="mt-[13px] h-[27px] w-[320px] bg-white border border-[#aaa] flex items-center pl-[2px] text-[#555]">
          <span>Search document</span>
          <Search size={15} strokeWidth={2.500} color="#2b579a" className="ml-auto mr-[20px] -scale-x-100" />
        </div>
        <div className="mt-[17px] flex h-[25px]">
          <div className="w-[53px] pl-[1px] h-[25px] leading-[16px] font-bold text-[#2b579a] border-b-[3px] border-[#2b579a]">Headings</div>
          <div className="ml-[24px] w-[58px] leading-[16px]">Pages</div>
          <div className="leading-[16px]">Results</div>
        </div>
        <div className="mt-[24px] leading-[16px] whitespace-nowrap">
          <p>Create an interactive outline of your document.</p>
          <p className="mt-[16px]">It's a great way to keep track of where you are or quickly</p>
          <p>move your content around.</p>
          <p className="mt-[16px]">To get started, go to the Home tab and apply Heading styles</p>
          <p>to the headings in your document.</p>
        </div>
      </div>
    </div>
    <Status />
    <Taskbar />
  </div>
);

export default function App() {
  return (
    <div className="relative w-[1920px] h-[1080px] overflow-hidden [font-family:Roboto,'Noto_Sans',sans-serif]">
      <Word />
      <DocWindow />
      <div className="absolute left-[468px] top-[1032px] w-[937px] h-[8px] bg-[#f0f0f0] border-r border-b border-[#999] z-10" />
      <SnipWindow />
    </div>
  );
}
